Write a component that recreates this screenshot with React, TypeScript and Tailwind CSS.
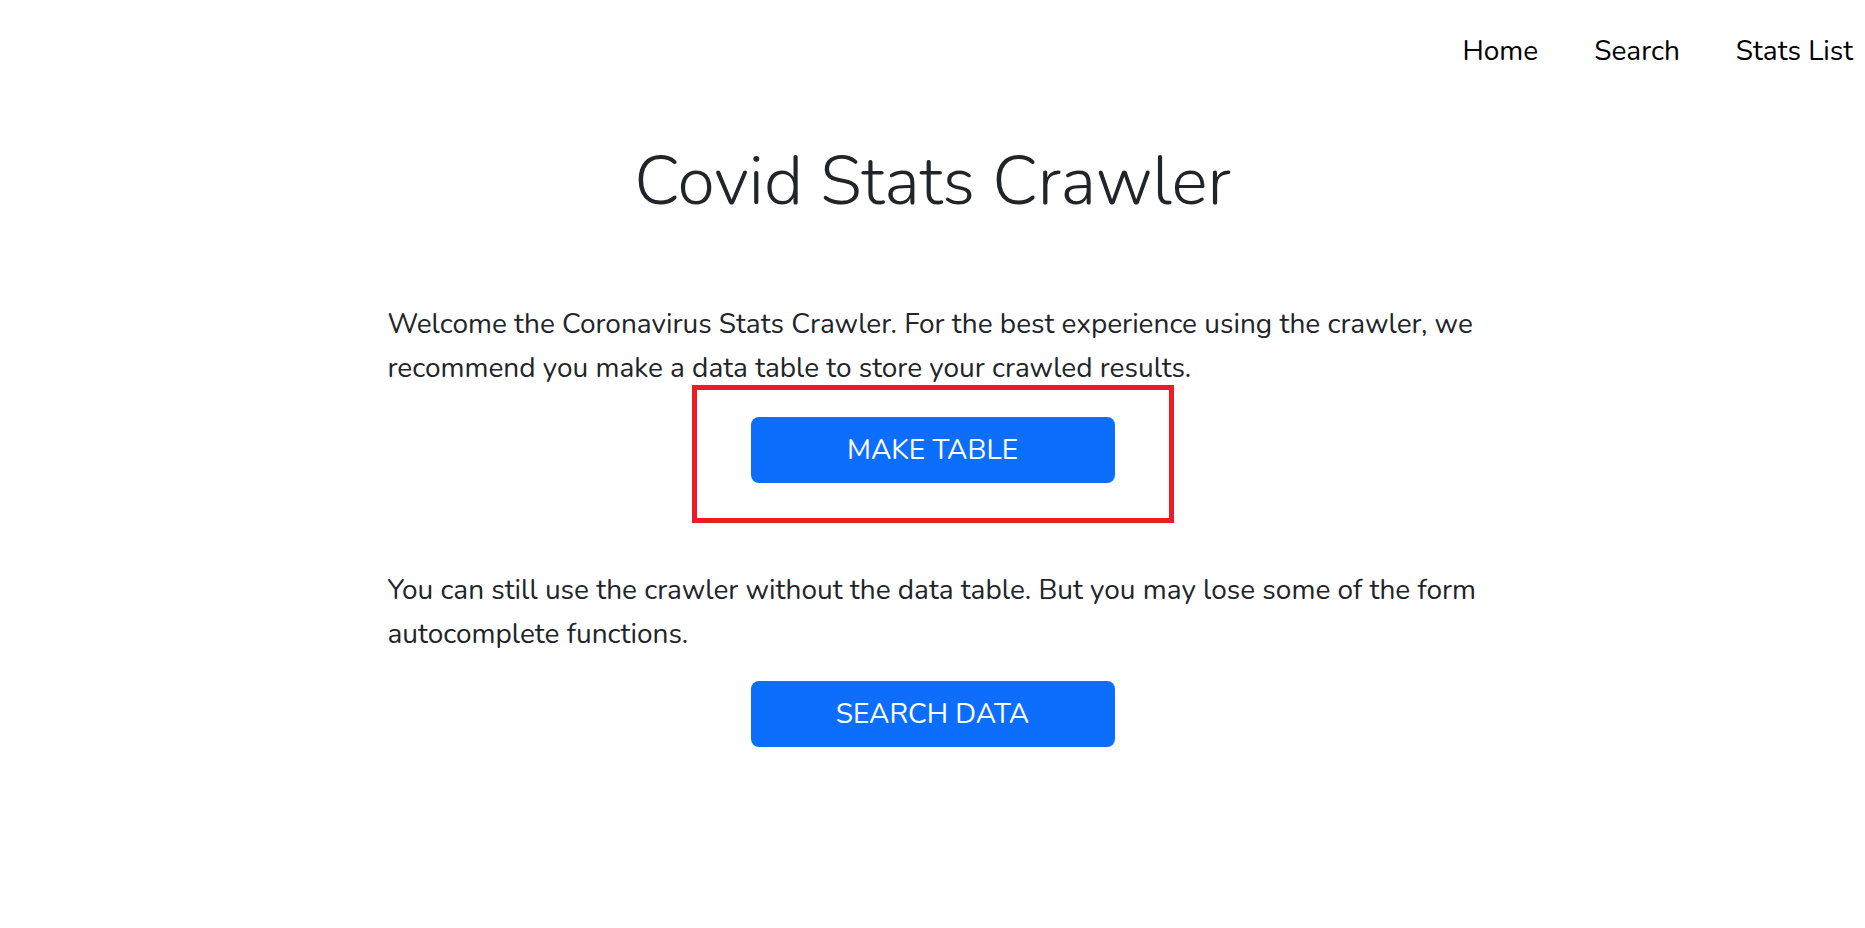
import React from "react";

const font = { fontFamily: "'Nunito', 'Noto Sans', 'Open Sans', sans-serif" };

export default function App() {
  return (
    <div className="min-h-[928px] bg-white text-[#212529]" style={font}>
      {/* Top nav */}
      <nav className="flex justify-end gap-[56px] pr-[12px] pt-[31px] text-[28px] leading-[40px] text-black">
        <a href="#">Home</a>
        <a href="#">Search</a>
        <a href="#">Stats List</a>
      </nav>

      <h1 className="mt-[69px] text-center text-[68px] leading-[84px] font-light text-[#212529]">
        Covid Stats Crawler
      </h1>

      <main className="mx-auto mt-[78px] w-[1090px] text-[28px] leading-[44px]">
        <p>
          Welcome the Coronavirus Stats Crawler. For the best experience using the crawler, we
          recommend you make a data table to store your crawled results.
        </p>

        <div className="mt-[27px] flex justify-center">
          <div className="relative">
            <button className="h-[66px] w-[364px] rounded-lg bg-[#0d6efd] text-[28px] text-white">
              MAKE TABLE
            </button>
            {/* annotation box */}
            <div className="pointer-events-none absolute -top-[32px] -bottom-[40px] -left-[59px] -right-[59px] border-[5px] border-[#ed1c24]" />
          </div>
        </div>

        <p className="mt-[85px]">
          You can still use the crawler without the data table. But you may lose some of the form
          autocomplete functions.
        </p>

        <div className="mt-[25px] flex justify-center">
          <button className="h-[66px] w-[364px] rounded-lg bg-[#0d6efd] text-[28px] text-white">
            SEARCH DATA
          </button>
        </div>
      </main>
    </div>
  );
}
